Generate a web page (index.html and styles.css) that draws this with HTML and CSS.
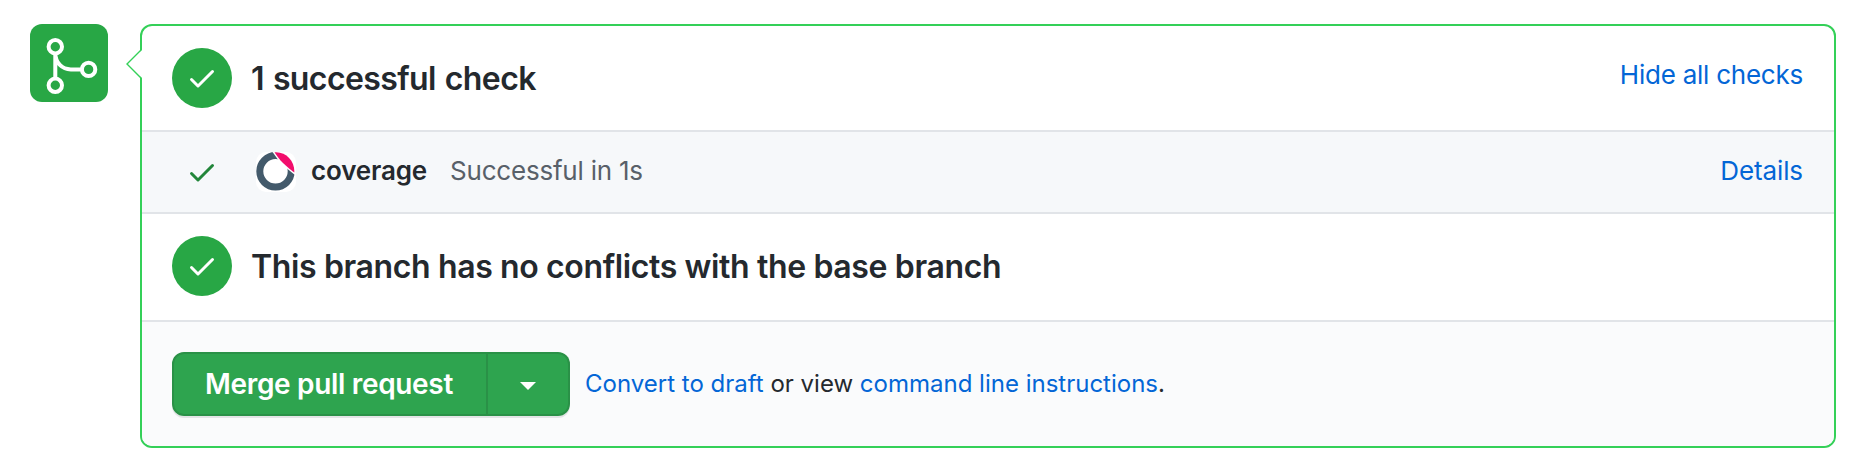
FILE: index.html
```html
<!DOCTYPE html>
<html lang="en">
<head>
<meta charset="utf-8">
<title>Merge pull request</title>
<link rel="stylesheet" href="styles.css">
</head>
<body>
<main class="merge">
  <div class="merge-badge">
    <svg width="78" height="78" viewBox="0 0 78 78" fill="none" stroke="#fff" stroke-width="4">
      <circle cx="25.3" cy="22.7" r="6.7"/>
      <circle cx="25.3" cy="61.3" r="6.7"/>
      <circle cx="58.6" cy="45.4" r="6.7"/>
      <path d="M25.3 29v26M25.3 29c0 10 7 16.4 15.5 16.4H52"/>
    </svg>
  </div>
  <section class="box">
    <svg class="pointer" width="16" height="30" viewBox="0 0 16 30"><path d="M16 .8L1.200 15L16 29.200z" fill="#fff"/><path d="M15.500.5L1 15l14.500 14.500" fill="none" stroke="#34d058" stroke-width="1.400"/></svg>
    <div class="row summary">
      <span class="disc"><svg class="check" viewBox="0 0 16 16"><path d="M13.780 4.220a.75.75 0 010 1.060l-7.250 7.250a.75.75 0 01-1.060 0L2.220 9.280a.75.75 0 011.060-1.060L6 10.940l6.720-6.720a.75.75 0 011.060 0z"/></svg></span>
      <h3 class="title title-checks">1 successful check</h3>
      <a class="link toggle">Hide all checks</a>
    </div>
    <div class="row status">
      <svg class="check status-check" viewBox="0 0 16 16"><path d="M13.780 4.220a.75.75 0 010 1.060l-7.250 7.250a.75.75 0 01-1.060 0L2.220 9.280a.75.75 0 011.060-1.060L6 10.940l6.720-6.720a.75.75 0 011.060 0z"/></svg>
      <svg class="avatar" width="40" height="40" viewBox="0 0 40 40">
        <rect width="40" height="40" rx="10" fill="#fff"/>
        <circle cx="19.500" cy="19.300" r="15.700" fill="none" stroke="#435a6b" stroke-width="7"/>
        <path d="M18.500.2C30-.8 39 9 38.300 20.500C35.500 18.500 31 14.800 27 11C23.500 7.500 21 4 18.500.2z" fill="#f20d6c" stroke="#fff" stroke-width="3" paint-order="stroke"/>
      </svg>
      <strong class="name">coverage</strong>
      <span class="note">Successful in 1s</span>
      <a class="link details">Details</a>
    </div>
    <div class="row conflicts">
      <span class="disc"><svg class="check" viewBox="0 0 16 16"><path d="M13.780 4.220a.75.75 0 010 1.060l-7.250 7.250a.75.75 0 01-1.060 0L2.220 9.280a.75.75 0 011.060-1.060L6 10.940l6.720-6.720a.75.75 0 011.060 0z"/></svg></span>
      <h3 class="title title-branch">This branch has no conflicts with the base branch</h3>
    </div>
    <div class="row footer">
      <div class="group">
        <button class="btn btn-main"><span>Merge pull request</span></button>
        <button class="btn btn-menu" aria-label="Merge options"><span class="caret"></span></button>
      </div>
      <p class="hint"><a class="link">Convert to draft</a> or view <a class="link">command line instructions</a>.</p>
    </div>
  </section>
</main>
</body>
</html>
```
FILE: styles.css
```css
* { box-sizing: border-box; }
body {
  margin: 0;
  background: #fff;
  color: #24292e;
  font: 26px/40px Inter, "Liberation Sans", sans-serif;
}
.merge {
  display: flex;
  align-items: flex-start;
  gap: 32px;
  padding: 24px 36px 26px 30px;
}
.merge-badge {
  width: 78px;
  height: 78px;
  border-radius: 12px;
  background: #28a745;
}
.merge-badge svg { display: block; }
.box {
  position: relative;
  flex: 1;
  height: 424px;
  border: 2px solid #34d058;
  border-radius: 12px;
}
.pointer { position: absolute; left: -16px; top: 23px; }
.row {
  display: flex;
  align-items: center;
  padding: 0 31px 0 30px;
  white-space: nowrap;
}
.summary { height: 104px; }
.status {
  height: 84px;
  border-top: 2px solid #e1e4e8;
  border-bottom: 2px solid #e1e4e8;
  background: #f6f8fa;
}
.conflicts { height: 106px; }
.footer {
  height: 126px;
  border-top: 2px solid #e1e4e8;
  border-radius: 0 0 10px 10px;
  background: #fafbfc;
}
.disc {
  display: flex;
  align-items: center;
  justify-content: center;
  width: 60px;
  height: 60px;
  border-radius: 50%;
  background: #28a745;
}
.conflicts .disc { margin-bottom: 2px; }
.check { width: 32px; height: 32px; fill: #fff; }
.status-check { margin: 0 38px 0 14px; fill: #22863a; }
.title {
  margin: 0 0 0 19px;
  font-size: 32px;
  font-weight: 600;
}
.title-checks { padding-top: 2px; letter-spacing: -0.6px; word-spacing: 1.5px; }
.title-branch { letter-spacing: -0.37px; }
.link { color: #0366d6; }
.toggle, .details { margin-left: auto; }
.toggle { margin-bottom: 6px; letter-spacing: -0.24px; }
.name { margin: 0 0 2px 15px; font-weight: 600; letter-spacing: -0.15px; }
.note { margin: 0 0 2px 23px; color: #586069; letter-spacing: -0.22px; }
.details { margin-bottom: 2px; letter-spacing: -0.1px; }
.group {
  display: flex;
  border-radius: 12px;
  box-shadow: 0 2px 0 rgba(27, 31, 35, 0.1);
}
.btn {
  display: flex;
  align-items: center;
  justify-content: center;
  height: 64px;
  padding: 0;
  border: 2px solid #2a9147;
  background: #2ea44f;
  color: #fff;
  font: 600 28px/40px Inter, "Liberation Sans", sans-serif;
}
.btn-main {
  width: 316px;
  padding-right: 2px;
  border-radius: 12px 0 0 12px;
  letter-spacing: -0.33px;
}
.btn-menu { width: 82px; border-left: 0; border-radius: 0 12px 12px 0; }
.caret {
  border: 8px solid transparent;
  border-top-color: #fff;
  border-bottom: 0;
  margin-top: 4px;
}
.hint { margin: 0 0 0 15px; font-size: 24px; }
```
